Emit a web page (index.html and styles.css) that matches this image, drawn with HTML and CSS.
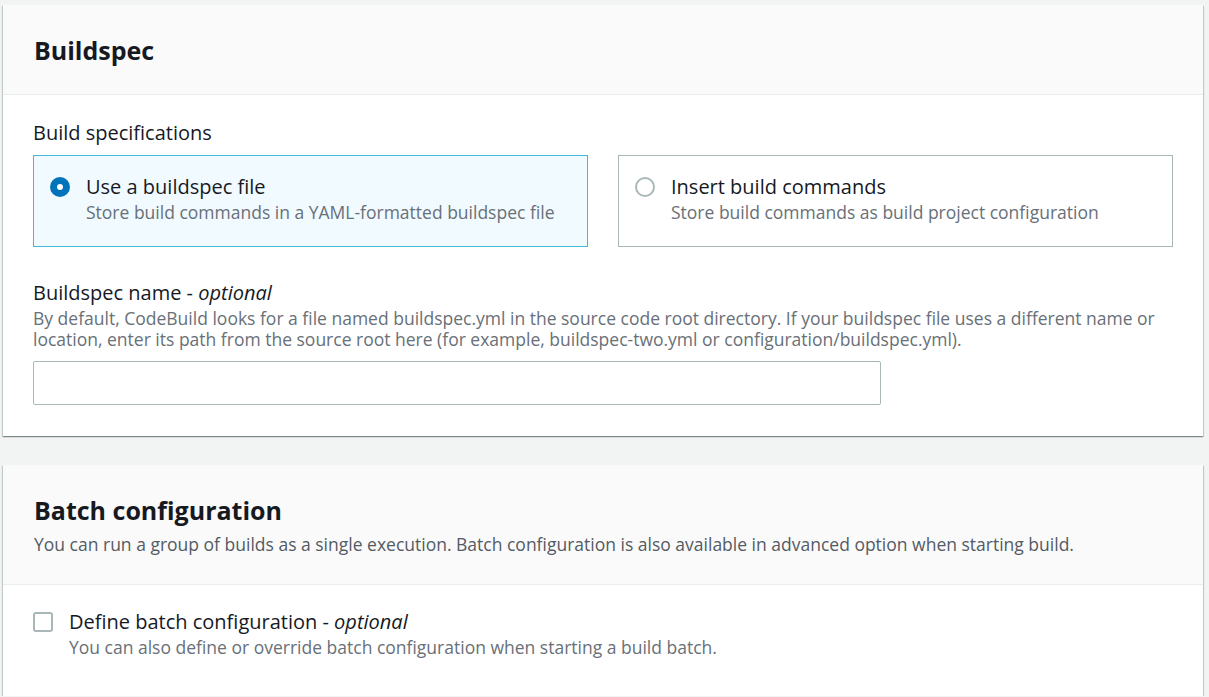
FILE: index.html
```html
<!DOCTYPE html>
<html>
<head>
<meta charset="utf-8">
<link rel="stylesheet" href="styles.css">
</head>
<body>
<div class="page">
  <section class="card">
    <header class="card-header">
      <h2 class="card-title">Buildspec</h2>
    </header>
    <div class="card-body">
      <div class="field-label">Build specifications</div>
      <div class="tiles">
        <div class="tile selected">
          <span class="radio checked"></span>
          <div class="tile-text">
            <div class="tile-label">Use a buildspec file</div>
            <div class="tile-desc">Store build commands in a YAML-formatted buildspec file</div>
          </div>
        </div>
        <div class="tile">
          <span class="radio"></span>
          <div class="tile-text">
            <div class="tile-label">Insert build commands</div>
            <div class="tile-desc">Store build commands as build project configuration</div>
          </div>
        </div>
      </div>
      <div class="field">
        <div class="field-label">Buildspec name - <i>optional</i></div>
        <div class="field-desc">By default, CodeBuild looks for a file named buildspec.yml in the source code root directory. If your buildspec file uses a different name or location, enter its path from the source root here (for example, buildspec-two.yml or configuration/buildspec.yml).</div>
        <input class="text-input" type="text">
      </div>
    </div>
  </section>

  <section class="card">
    <header class="card-header tall">
      <h2 class="card-title">Batch configuration</h2>
      <div class="card-desc">You can run a group of builds as a single execution. Batch configuration is also available in advanced option when starting build.</div>
    </header>
    <div class="card-body batch">
      <div class="check-row">
        <span class="checkbox"></span>
        <div class="tile-text">
          <div class="tile-label">Define batch configuration - <i>optional</i></div>
          <div class="tile-desc">You can also define or override batch configuration when starting a build batch.</div>
        </div>
      </div>
    </div>
  </section>
</div>
</body>
</html>
```

FILE: styles.css
```css
* { box-sizing: border-box; }
html, body { margin: 0; padding: 0; }
body {
  background: #f2f3f3;
  font-family: "Open Sans", "Noto Sans", sans-serif;
  color: #16191f;
  overflow: hidden;
}
.page {
  padding: 5px 0 0 3px;
  display: flex;
  flex-direction: column;
  gap: 29px;
}
.card {
  width: 1200px;
  background: #fff;
  box-shadow: 0 1px 1px 0 rgba(0,28,36,.3), 1px 1px 1px 0 rgba(0,28,36,.15), -1px 1px 1px 0 rgba(0,28,36,.15);
}
.card-header {
  background: #fafafa;
  border-bottom: 1px solid #eaeded;
  height: 90px;
  padding: 0 31px;
  display: flex;
  flex-direction: column;
  justify-content: center;
}
.card-header.tall {
  height: 120px;
  justify-content: flex-start;
  padding-top: 29px;
}
.card-title {
  margin: 0;
  font-size: 25px;
  font-weight: 700;
  line-height: 32px;
}
.card-desc {
  font-size: 17.5px;
  color: #545b64;
  line-height: 24px;
  margin-top: 6px;
}
.card-body {
  padding: 26px 30px 31px 30px;
}
.card-body.batch {
  padding-top: 25px;
  padding-bottom: 0;
  height: 111px;
}
.field-label {
  font-size: 20px;
  line-height: 24px;
}
.tiles {
  display: grid;
  grid-template-columns: 1fr 1fr;
  gap: 30px;
  margin-top: 10px;
}
.tile {
  border: 1px solid #aab7b8;
  height: 92px;
  display: flex;
  align-items: flex-start;
  padding: 19px 16px;
  gap: 16px;
}
.tile.selected {
  border-color: #44b9d6;
  background: #f1faff;
}
.radio {
  width: 20px;
  height: 20px;
  border-radius: 50%;
  border: 2px solid #aab7b8;
  background: #fff;
  margin-top: 2px;
  flex: none;
}
.radio.checked {
  border: 7px solid #0073bb;
}
.tile-label {
  font-size: 20px;
  line-height: 24px;
}
.tile-desc {
  font-size: 17.5px;
  line-height: 26px;
  color: #687078;
}
.field {
  margin-top: 34px;
}
.field-desc {
  font-size: 17.5px;
  line-height: 21px;
  margin-top: 3px;
  color: #687078;
}
.text-input {
  display: block;
  width: 848px;
  height: 44px;
  margin-top: 11px;
  border: 1px solid #aab7b8;
  border-radius: 2px;
  background: #fff;
}
.check-row {
  display: flex;
  gap: 16px;
}
.checkbox {
  width: 20px;
  height: 20px;
  border: 2px solid #aab7b8;
  border-radius: 3px;
  margin-top: 2px;
  flex: none;
}
```
